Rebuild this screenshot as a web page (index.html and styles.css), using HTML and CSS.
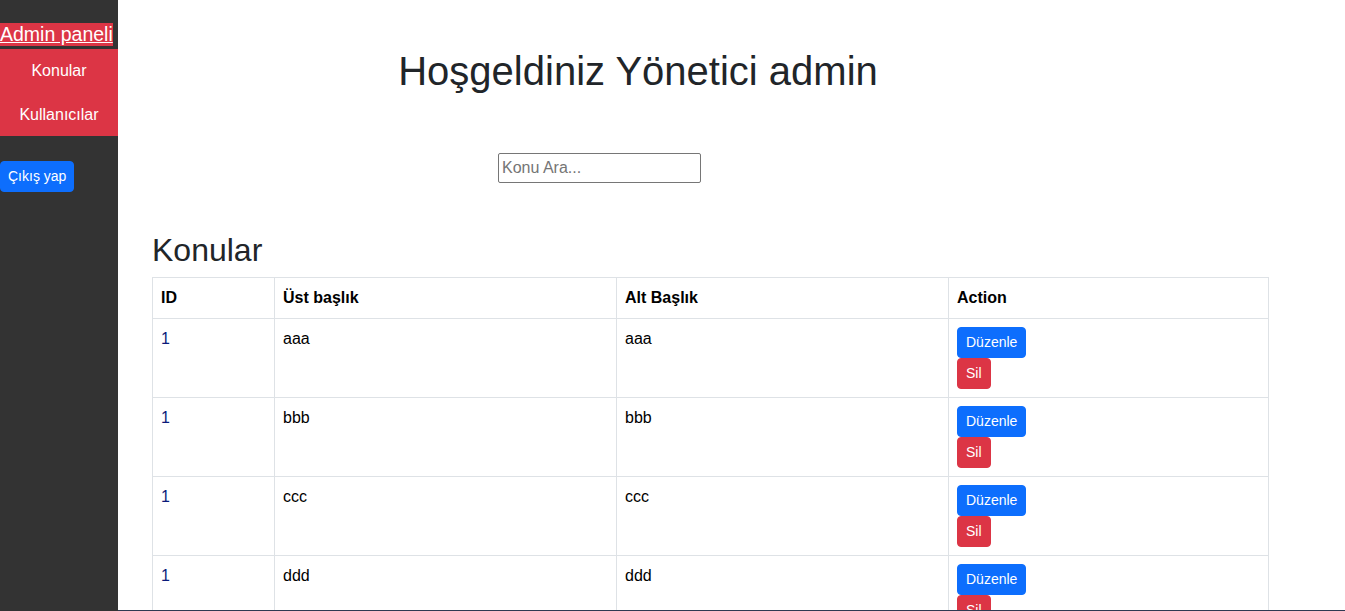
FILE: index.html
```html
<!DOCTYPE html>
<html lang="tr">
<head>
<meta charset="utf-8">
<title>Admin paneli</title>
<link rel="stylesheet" href="styles.css">
</head>
<body>
<div class="layout">
  <aside class="sidebar">
    <div class="brand"><a href="#" class="brand-link">Admin paneli</a></div>
    <ul class="side-nav">
      <li><a href="#">Konular</a></li>
      <li><a href="#">Kullanıcılar</a></li>
    </ul>
    <button class="btn btn-blue logout">Çıkış yap</button>
  </aside>
  <main class="main">
    <h1 class="welcome">Hoşgeldiniz Yönetici admin</h1>
    <div class="search-row"><input class="search" type="text" placeholder="Konu Ara..."></div>
    <h2 class="section-title">Konular</h2>
    <table class="topics">
      <colgroup>
        <col class="c-id"><col class="c-top"><col class="c-sub"><col class="c-act">
      </colgroup>
      <thead>
        <tr><th>ID</th><th>Üst başlık</th><th>Alt Başlık</th><th>Action</th></tr>
      </thead>
      <tbody>
        <tr><td class="id">1</td><td>aaa</td><td>aaa</td><td><div class="actions"><button class="btn btn-blue">Düzenle</button><button class="btn btn-red">Sil</button></div></td></tr>
        <tr><td class="id">1</td><td>bbb</td><td>bbb</td><td><div class="actions"><button class="btn btn-blue">Düzenle</button><button class="btn btn-red">Sil</button></div></td></tr>
        <tr><td class="id">1</td><td>ccc</td><td>ccc</td><td><div class="actions"><button class="btn btn-blue">Düzenle</button><button class="btn btn-red">Sil</button></div></td></tr>
        <tr><td class="id">1</td><td>ddd</td><td>ddd</td><td><div class="actions"><button class="btn btn-blue">Düzenle</button><button class="btn btn-red">Sil</button></div></td></tr>
      </tbody>
    </table>
  </main>
</div>
<div class="bottom-line"></div>
</body>
</html>
```
FILE: styles.css
```css
html, body {
  margin: 0;
  padding: 0;
  font-family: "Liberation Sans", Arial, sans-serif;
  color: #212529;
  background: #fff;
  overflow: hidden;
}
.layout {
  display: flex;
  min-height: 100vh;
}
.sidebar {
  width: 118px;
  flex: none;
  background: #333333;
  min-height: 100vh;
}
.brand {
  margin: 23px 0 3px;
  font-size: 19.5px;
  line-height: 23px;
  height: 23px;
}
.brand-link {
  color: #fff;
  background: #dc3545;
  text-decoration: underline;
  display: inline-block;
  line-height: 23px;
}
.side-nav {
  list-style: none;
  margin: 0;
  padding: 0;
  background: #dc3545;
}
.side-nav li a {
  display: block;
  text-align: center;
  color: #fff;
  text-decoration: none;
  font-size: 16px;
  line-height: 24px;
  padding: 10px 0 9.5px;
}
.btn {
  display: block;
  font-family: "Liberation Sans", Arial, sans-serif;
  font-size: 14px;
  line-height: 21px;
  padding: 4px 8px;
  border: 1px solid transparent;
  border-radius: 4px;
  color: #fff;
  cursor: pointer;
}
.btn-blue {
  background: #0d6efd;
  border-color: #0d6efd;
}
.btn-red {
  background: #dc3545;
  border-color: #dc3545;
}
.logout {
  margin-top: 25px;
  padding: 4px 7px;
}
.main {
  flex: 1;
  padding: 47px 0 0 34px;
}
.welcome {
  width: 972px;
  margin: 0;
  text-align: center;
  font-size: 40px;
  font-weight: 400;
  line-height: 48px;
}
.search-row {
  margin-top: 58px;
  padding-left: 346px;
}
.search {
  box-sizing: border-box;
  width: 203px;
  height: 30px;
  font-family: "Liberation Sans", Arial, sans-serif;
  font-size: 16px;
  padding: 1px 3px;
  border: 1px solid #767676;
  border-radius: 2px;
  color: #000;
}
.search::placeholder {
  color: #757575;
}
.section-title {
  margin: 48px 0 8px;
  font-size: 32px;
  font-weight: 400;
  line-height: 38px;
}
.topics {
  border-collapse: collapse;
  table-layout: fixed;
  width: 1116px;
  font-size: 16px;
  line-height: 24px;
  color: #000;
}
.c-id { width: 122px; }
.c-top { width: 342px; }
.c-sub { width: 332px; }
.c-act { width: 320px; }
.topics th, .topics td {
  border: 1px solid #dee2e6;
  padding: 8px;
  text-align: left;
  vertical-align: top;
}
.topics th {
  font-weight: 700;
}
.topics td.id {
  color: #0a1a7a;
}
.actions {
  display: flex;
  flex-direction: column;
  align-items: flex-start;
}
.bottom-line {
  position: fixed;
  left: 118px;
  right: 0;
  bottom: 0;
  height: 1px;
  background: #2e3a52;
}
```
